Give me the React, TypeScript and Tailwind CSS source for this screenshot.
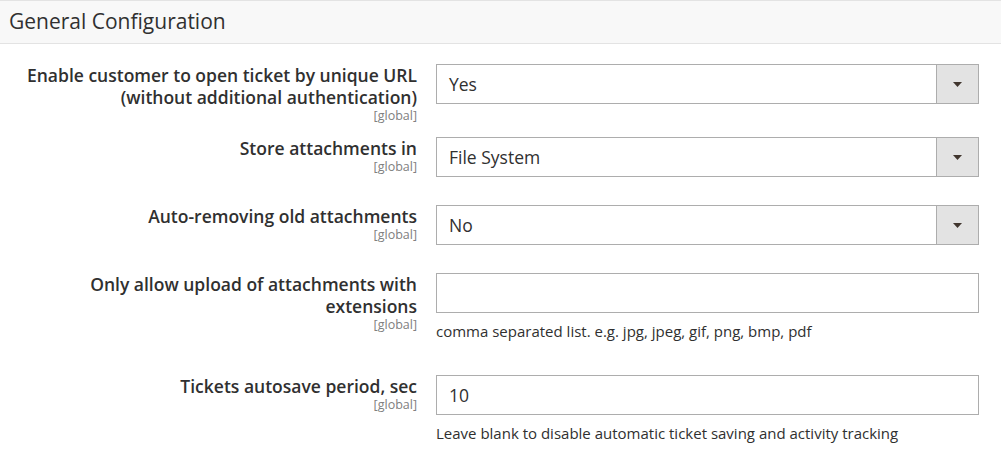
import React from "react";

function Label({ lines }: { lines: string[] }) {
  return (
    <div className="w-[417px] shrink-0 text-right">
      {lines.map((l, i) => (
        <div key={i} className="text-[17.5px] leading-[22px] font-semibold text-[#303030]">
          {l}
        </div>
      ))}
      <div className="text-[12.5px] leading-[15px] text-[#808080]">[global]</div>
    </div>
  );
}

function Select({ value }: { value: string }) {
  return (
    <div className="flex h-[40px] w-[543px] border border-[#adadad] bg-white">
      <div className="flex flex-1 items-center pl-[12px] text-[17.5px] text-[#303030]">{value}</div>
      <div className="flex w-[42px] items-center justify-center border-l border-[#adadad] bg-[#e3e3e3]">
        <svg width="9" height="5" viewBox="0 0 9 5">
          <path d="M0 0 L9 0 L4.5 5 Z" fill="#41362f" />
        </svg>
      </div>
    </div>
  );
}

function Input({ value }: { value?: string }) {
  return (
    <div className="flex h-[40px] w-[543px] items-center border border-[#adadad] bg-white pl-[12px] text-[17.5px] text-[#303030]">
      {value}
    </div>
  );
}

export default function App() {
  return (
    <div className="h-[456px] w-[1001px] bg-white" style={{ fontFamily: '"Open Sans", sans-serif' }}>
      <div className="flex h-[44px] items-center border-y border-[#e3e3e3] bg-[#f8f8f8] pl-[9px] text-[21px] text-[#303030]">
        General Configuration
      </div>
      <div className="pt-[20px]">
        <div className="mb-[14px] flex">
          <Label lines={["Enable customer to open ticket by unique URL", "(without additional authentication)"]} />
          <div className="ml-[19px]">
            <Select value="Yes" />
          </div>
        </div>
        <div className="mb-[28px] flex">
          <Label lines={["Store attachments in"]} />
          <div className="ml-[19px]">
            <Select value="File System" />
          </div>
        </div>
        <div className="mb-[28px] flex">
          <Label lines={["Auto-removing old attachments"]} />
          <div className="ml-[19px]">
            <Select value="No" />
          </div>
        </div>
        <div className="mb-[34px] flex">
          <Label lines={["Only allow upload of attachments with", "extensions"]} />
          <div className="ml-[19px]">
            <Input />
            <div className="mt-[8px] text-[15px] leading-[20px] text-[#303030]">
              comma separated list. e.g. jpg, jpeg, gif, png, bmp, pdf
            </div>
          </div>
        </div>
        <div className="flex">
          <Label lines={["Tickets autosave period, sec"]} />
          <div className="ml-[19px]">
            <Input value="10" />
            <div className="mt-[8px] text-[15px] leading-[20px] text-[#303030]">
              Leave blank to disable automatic ticket saving and activity tracking
            </div>
          </div>
        </div>
      </div>
    </div>
  );
}
